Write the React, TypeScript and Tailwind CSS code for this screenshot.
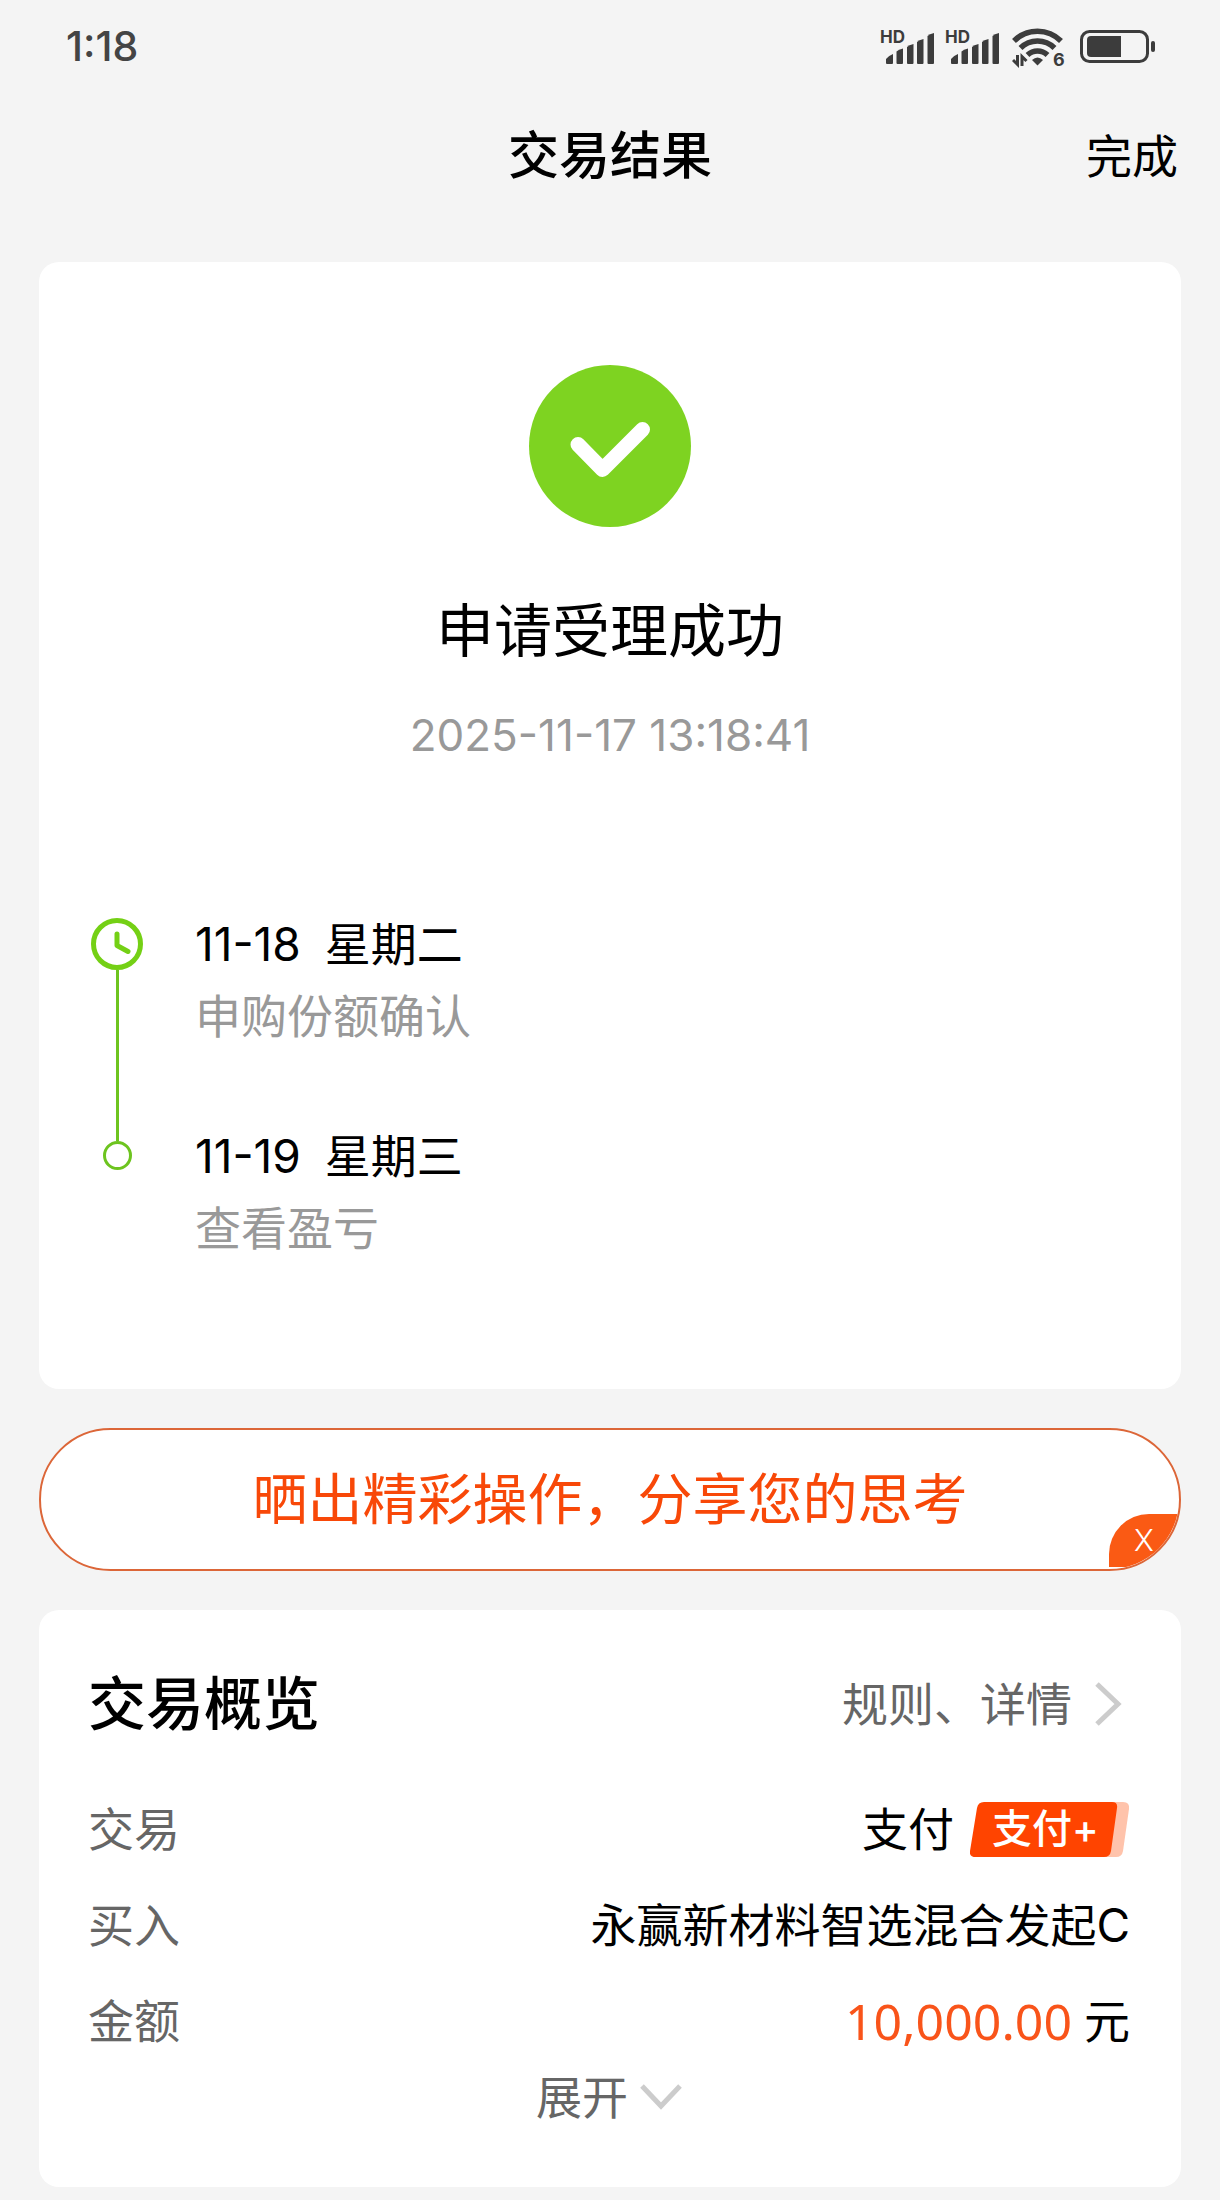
import type { ReactNode } from "react";

function SignalIcon() {
  return (
    <svg width="56" height="44" viewBox="0 -4 56 44" fill="#3c3c3c" aria-hidden="true">
      <text x="0" y="14" fontSize="17" fontWeight="700" fontFamily="Inter, sans-serif">HD</text>
      <path d="M6 34v-4q2-3 7-5v9q0 1-1 1H7q-1 0-1-1z" />
      <path d="M16.500 34V22.500q2-2 6.500-3V34q0 1-1 1h-4.500q-1 0-1-1z" />
      <path d="M27 34V18q2-2 6.500-3v19q0 1-1 1H28q-1 0-1-1z" />
      <path d="M37 34V13q2-2 6.500-3v24q0 1-1 1H38q-1 0-1-1z" />
      <path d="M47.500 34V7q2-2 6.500-3v30q0 1-1 1h-4.500q-1 0-1-1z" />
    </svg>
  );
}

function WifiIcon() {
  return (
    <svg width="56" height="48" viewBox="0 -4 56 48" aria-hidden="true">
      <g fill="none" stroke="#3c3c3c" strokeWidth="5.500">
        <path d="M2 14a33 33 0 0 1 47 0" />
        <path d="M8.500 21a24 24 0 0 1 34 0" />
        <path d="M15.500 28a14.500 14.500 0 0 1 20 0" />
      </g>
      <path d="M20 33q5.500-5 11 0l-5.500 5.500z" fill="#3c3c3c" />
      <path d="M1 33l4.500 4.500V28M14.500 34L10 29.500V39" fill="none" stroke="#3c3c3c" strokeWidth="3" />
      <text x="41" y="39" fontSize="18" fontWeight="700" fill="#3c3c3c" fontFamily="Inter, sans-serif">6</text>
    </svg>
  );
}

function BatteryIcon() {
  return (
    <svg width="76" height="34" viewBox="0 0 76 34" aria-hidden="true">
      <rect x="1.500" y="1.500" width="66" height="30" rx="8" fill="none" stroke="#3c3c3c" strokeWidth="3" />
      <path d="M11 6h30v21H11q-4 0-4-4V10q0-4 4-4z" fill="#3c3c3c" />
      <rect x="71" y="11" width="4" height="11" rx="2" fill="#3c3c3c" />
    </svg>
  );
}

function SuccessIcon() {
  return (
    <svg width="162" height="162" viewBox="0 0 162 162" aria-hidden="true">
      <circle cx="81" cy="81" r="81" fill="#7ed321" />
      <path d="M49 79.500L73.500 104.500L113.500 64.500" fill="none" stroke="#fff" strokeWidth="15" strokeLinecap="round" strokeLinejoin="round" />
    </svg>
  );
}

function ClockIcon() {
  return (
    <svg width="52" height="52" viewBox="0 0 52 52" fill="none" stroke="#74d015" aria-hidden="true">
      <circle cx="26" cy="26" r="23.500" strokeWidth="5" />
      <path d="M26 16v11.500L37 33.500" strokeWidth="5" strokeLinecap="round" strokeLinejoin="round" />
    </svg>
  );
}

function PayPlusBadge() {
  return (
    <span className="relative flex h-[55px] w-40 items-center pl-[22px] text-[40px] font-medium text-white">
      <svg className="absolute inset-0" width="160" height="55" viewBox="0 0 160 55" aria-hidden="true">
        <path d="M138 0h15q7 0 6 7l-6 42q-1 6-7 6h-16z" fill="#ffc3ab" />
        <path d="M14 0h128q6 0 5 6l-6 43q-1 6-7 6H6q-7 0-6-6L7 6q1-6 7-6z" fill="#ff4400" />
      </svg>
      <span className="relative">支付+</span>
    </span>
  );
}

function Step({ date, day, text, marker, className }: { date: string; day: string; text: string; marker: ReactNode; className?: string }) {
  return (
    <li className="flex gap-[52px]">
      <div className="flex w-[52px] flex-col items-center">{marker}</div>
      <div className={`text-[46px] leading-[72px] ${className ?? ""}`}>
        <p className="flex gap-6">
          <span>{date}</span>
          <span>{day}</span>
        </p>
        <p className="text-[#999]">{text}</p>
      </div>
    </li>
  );
}

function Row({ label, children }: { label: string; children: ReactNode }) {
  return (
    <div className="flex items-center justify-between">
      <dt className="text-[#666]">{label}</dt>
      <dd className="flex items-center">{children}</dd>
    </div>
  );
}

export default function App() {
  return (
    <div className="min-h-screen bg-[#f4f4f4] pb-3 font-['Inter','Noto_Sans_CJK_SC',sans-serif] text-black">
      <div className="flex h-[94px] items-center justify-between pr-16 pl-[66px]">
        <span className="text-[41px] font-medium text-[#444]">1:18</span>
        <div className="flex items-center">
          <SignalIcon />
          <span className="w-[9px]" />
          <SignalIcon />
          <span className="w-[11px]" />
          <WifiIcon />
          <span className="w-3" />
          <BatteryIcon />
        </div>
      </div>

      <header className="grid grid-cols-[1fr_auto_1fr] items-center px-[42px] py-6 leading-[76px]">
        <h1 className="col-start-2 text-[51px] font-medium">交易结果</h1>
        <button type="button" className="justify-self-end text-[46px]">完成</button>
      </header>

      <main className="flex flex-col gap-[39px] px-[39px] pt-11">
        <section className="rounded-[20px] bg-white px-[52px] pt-[103px] pb-[125px]">
          <div className="flex flex-col items-center">
            <SuccessIcon />
            <h2 className="mt-16 text-[58px] leading-[80px]">申请受理成功</h2>
            <p className="mt-8 text-[44px] leading-[64px] text-[#999]">2025-11-17 13:18:41</p>
          </div>

          <ol className="mt-[141px]">
            <Step
              date="11-18"
              day="星期二"
              text="申购份额确认"
              className="pb-[68px]"
              marker={
                <>
                  <div className="pt-[10px]"><ClockIcon /></div>
                  <div className="w-[3px] flex-1 bg-[#6dc41f]" />
                </>
              }
            />
            <Step
              date="11-19"
              day="星期三"
              text="查看盈亏"
              marker={
                <>
                  <div className="h-[21px] w-[3px] bg-[#6dc41f]" />
                  <div className="size-[29px] rounded-full border-3 border-[#6dc41f]" />
                </>
              }
            />
          </ol>
        </section>

        <div className="relative overflow-hidden rounded-full border-2 border-[#dc6638] bg-white">
          <button type="button" className="w-full py-[29px] text-[55px] leading-[81px] text-[#f84808]">
            晒出精彩操作，分享您的思考
          </button>
          <button
            type="button"
            aria-label="关闭"
            className="absolute right-0 bottom-[2px] h-[53px] w-[70px] rounded-tl-[40px] bg-[#fa5a14] text-[30px] leading-[53px] font-light text-white"
          >
            X
          </button>
        </div>

        <section className="rounded-[20px] bg-white py-[58px] pr-[51px] pl-[49px] text-[46px] leading-[64px]">
          <div className="flex items-center justify-between">
            <h2 className="text-[58px] leading-[72px] font-medium">交易概览</h2>
            <a href="#detail" className="flex items-center gap-[22px] pr-2 text-[#666]">
              规则、详情
              <svg width="28" height="44" viewBox="0 0 28 44" fill="none" stroke="#ccc" strokeWidth="5" aria-hidden="true">
                <path d="M3 2l21 20L3 42" />
              </svg>
            </a>
          </div>

          <dl className="mt-[57px] flex flex-col gap-8">
            <Row label="交易">
              <span className="mr-4">支付</span>
              <PayPlusBadge />
            </Row>
            <Row label="买入">永赢新材料智选混合发起C</Row>
            <Row label="金额">
              <span className="mr-3 font-['Noto_Sans',sans-serif] text-[50px] text-[#f9541a]">10,000.00</span>
              元
            </Row>
          </dl>

          <button type="button" className="mx-auto mt-3 flex items-center gap-3 text-[#666]">
            展开
            <svg width="42" height="26" viewBox="0 0 42 26" fill="none" stroke="#ccc" strokeWidth="5" aria-hidden="true">
              <path d="M2 2l19 20L40 2" />
            </svg>
          </button>
        </section>
      </main>
    </div>
  );
}
